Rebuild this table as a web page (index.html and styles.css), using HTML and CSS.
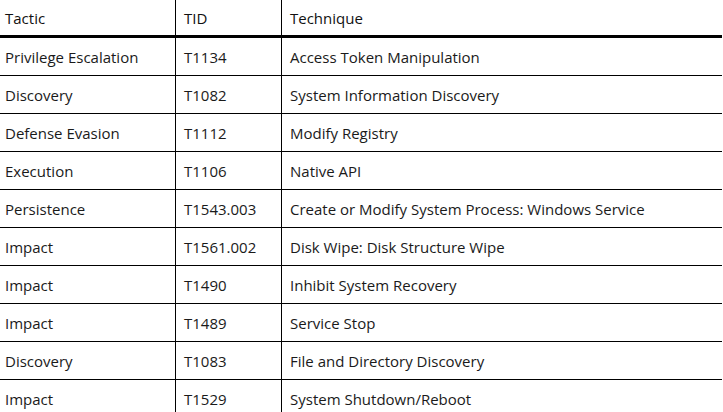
FILE: index.html
```html
<!DOCTYPE html>
<html>
<head>
<meta charset="utf-8">
<link rel="stylesheet" href="styles.css">
</head>
<body>
<table class="ttp">
  <thead>
    <tr><th class="c1">Tactic</th><th class="c2">TID</th><th class="c3">Technique</th></tr>
  </thead>
  <tbody>
    <tr><td>Privilege Escalation</td><td>T1134</td><td>Access Token Manipulation</td></tr>
    <tr><td>Discovery</td><td>T1082</td><td>System Information Discovery</td></tr>
    <tr><td>Defense Evasion</td><td>T1112</td><td>Modify Registry</td></tr>
    <tr><td>Execution</td><td>T1106</td><td>Native API</td></tr>
    <tr><td>Persistence</td><td>T1543.003</td><td>Create or Modify System Process: Windows Service</td></tr>
    <tr><td>Impact</td><td>T1561.002</td><td>Disk Wipe: Disk Structure Wipe</td></tr>
    <tr><td>Impact</td><td>T1490</td><td>Inhibit System Recovery</td></tr>
    <tr><td>Impact</td><td>T1489</td><td>Service Stop</td></tr>
    <tr><td>Discovery</td><td>T1083</td><td>File and Directory Discovery</td></tr>
    <tr><td>Impact</td><td>T1529</td><td>System Shutdown/Reboot</td></tr>
  </tbody>
</table>
</body>
</html>
```
FILE: styles.css
```css
html, body {
  margin: 0;
  padding: 0;
  background: #fff;
}
.ttp {
  border-collapse: collapse;
  width: 722px;
  table-layout: fixed;
  font-family: "Open Sans", "Noto Sans", sans-serif;
  font-size: 15px;
  color: #1a1a1a;
}
.ttp th, .ttp td {
  text-align: left;
  padding: 0 8px;
  border-left: 1px solid #000;
  white-space: nowrap;
}
.ttp th:first-child, .ttp td:first-child {
  border-left: none;
  padding-left: 5px;
}
.ttp th {
  font-weight: 500;
  height: 35px;
  border-bottom: 3px solid #000;
  color: #111;
}
.ttp td {
  height: 37px;
  border-bottom: 1px solid #000;
}
.c1 { width: 162px; }
.c2 { width: 89px; }
.c3 { width: auto; }
```
